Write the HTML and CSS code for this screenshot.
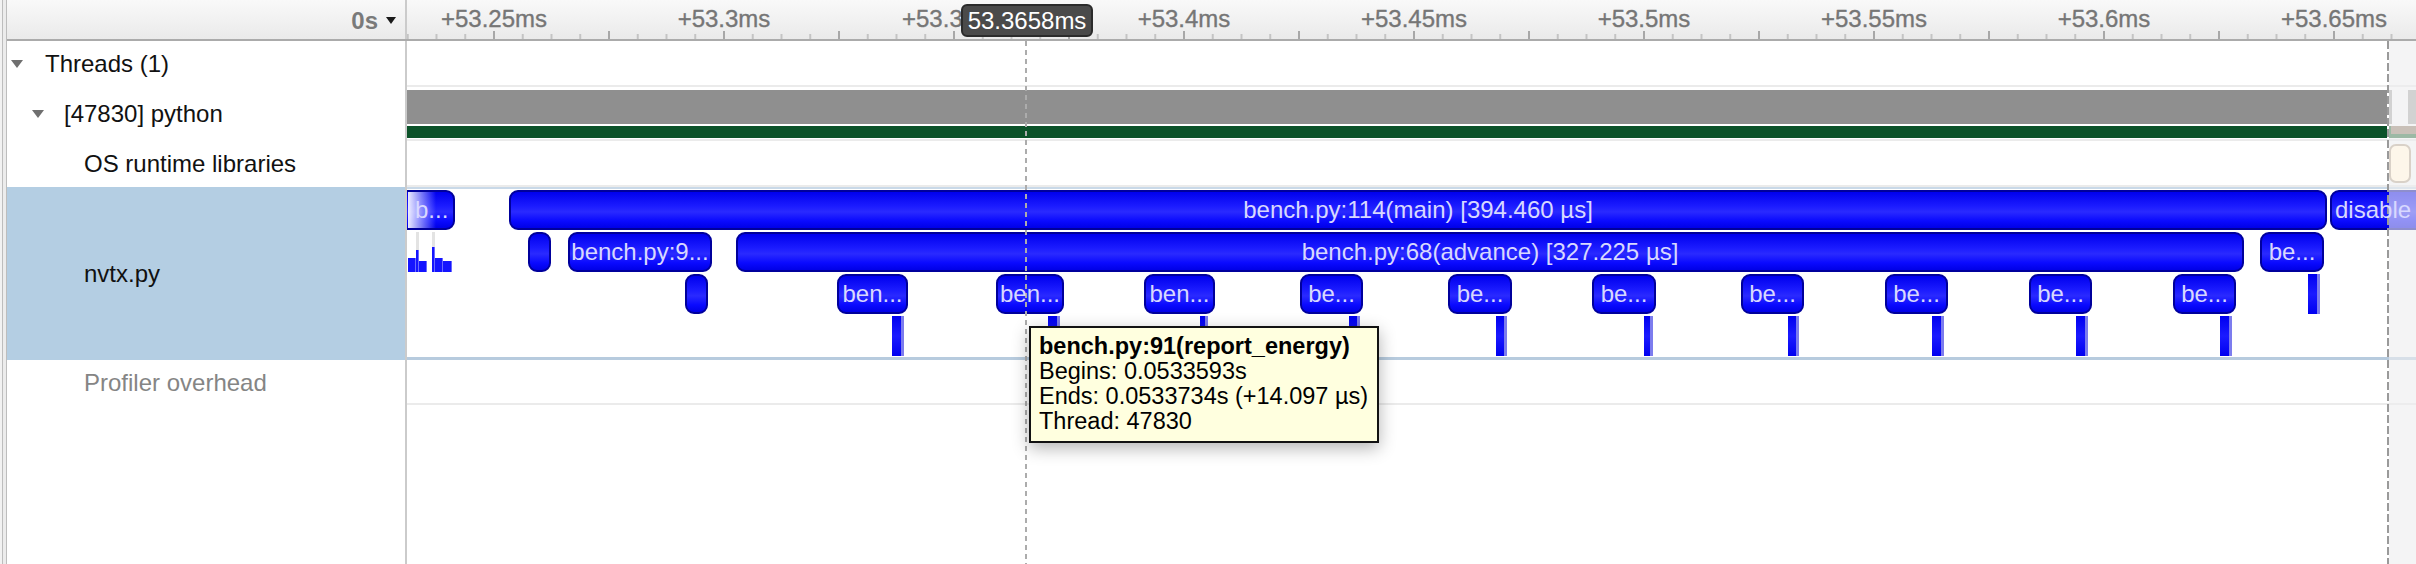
FILE: index.html
```html
<!DOCTYPE html>
<html>
<head>
<meta charset="utf-8">
<title>Timeline</title>
<link rel="stylesheet" href="styles.css">
</head>
<body>
<div class="window">
  <div class="edge"></div>
  <div class="main">
    <div class="header">
      <div class="hdr-left"><span class="zero">0s</span><span class="caret"></span></div>
      <div class="ruler">
        <span class="rlabel" style="left:87px">+53.25ms</span>
        <span class="rlabel" style="left:317px">+53.3ms</span>
        <span class="rlabel-cut" style="left:495px">+53.3</span>
        <span class="rlabel" style="left:777px">+53.4ms</span>
        <span class="rlabel" style="left:1007px">+53.45ms</span>
        <span class="rlabel" style="left:1237px">+53.5ms</span>
        <span class="rlabel" style="left:1467px">+53.55ms</span>
        <span class="rlabel" style="left:1697px">+53.6ms</span>
        <span class="rlabel" style="left:1927px">+53.65ms</span>
        <div class="cursor-label">53.3658ms</div>
      </div>
    </div>
    <div class="body">
      <div class="labels">
        <div class="lrow h-threads"><span class="tri"></span><span class="ltext">Threads (1)</span></div>
        <div class="lrow h-python indent1"><span class="tri"></span><span class="ltext">[47830] python</span></div>
        <div class="lrow h-os indent2"><span class="ltext">OS runtime libraries</span></div>
        <div class="lrow h-nvtx indent2 selected"><span class="ltext">nvtx.py</span></div>
        <div class="lrow h-prof indent2"><span class="ltext muted">Profiler overhead</span></div>
      </div>
      <div class="tracks">
        <div class="trow t-threads"></div>
        <div class="trow t-python">
          <div class="cpu"></div>
          <div class="state"></div>
        </div>
        <div class="trow t-os"></div>
        <div class="trow t-nvtx">
          <div class="hist-bg" style="left:9px"></div>
          <div class="hist-bg" style="left:25px"></div>
          <div class="hist" style="left:1px;width:8px;top:69px;height:14px"></div>
          <div class="hist" style="left:9px;width:3px;top:61px;height:22px"></div>
          <div class="hist" style="left:12px;width:8px;top:72px;height:11px"></div>
          <div class="hist" style="left:25px;width:3px;top:58px;height:25px"></div>
          <div class="hist" style="left:28px;width:8px;top:69px;height:14px"></div>
          <div class="hist" style="left:36px;width:9px;top:72px;height:11px"></div>

          <div class="bar r1 fade" style="left:-9px;width:57px"><span class="btxt">b...</span></div>
          <div class="bar r1" style="left:102px;width:1818px"><span class="btxt">bench.py:114(main) [394.460 µs]</span></div>
          <div class="bar r1 lead" style="left:1923px;width:110px"><span class="btxt">disable</span></div>

          <div class="bar r2" style="left:121px;width:23px"></div>
          <div class="bar r2" style="left:161px;width:144px"><span class="btxt">bench.py:9...</span></div>
          <div class="bar r2" style="left:329px;width:1508px"><span class="btxt">bench.py:68(advance) [327.225 µs]</span></div>
          <div class="bar r2" style="left:1853px;width:64px"><span class="btxt">be...</span></div>

          <div class="bar r3" style="left:278px;width:23px"></div>
          <div class="bar r3" style="left:430px;width:71px"><span class="btxt">ben...</span></div>
          <div class="bar r3" style="left:589px;width:68px"><span class="btxt">ben...</span></div>
          <div class="bar r3" style="left:737px;width:71px"><span class="btxt">ben...</span></div>
          <div class="bar r3" style="left:893px;width:63px"><span class="btxt">be...</span></div>
          <div class="bar r3" style="left:1041px;width:64px"><span class="btxt">be...</span></div>
          <div class="bar r3" style="left:1185px;width:64px"><span class="btxt">be...</span></div>
          <div class="bar r3" style="left:1334px;width:63px"><span class="btxt">be...</span></div>
          <div class="bar r3" style="left:1478px;width:63px"><span class="btxt">be...</span></div>
          <div class="bar r3" style="left:1622px;width:63px"><span class="btxt">be...</span></div>
          <div class="bar r3" style="left:1766px;width:63px"><span class="btxt">be...</span></div>
          <div class="slim r3" style="left:1901px;width:12px"></div>

          <div class="slim r4" style="left:485px;width:12px"></div>
          <div class="slim r4" style="left:641px;width:12px"></div>
          <div class="slim r4" style="left:793px;width:8px"></div>
          <div class="slim r4" style="left:942px;width:11px"></div>
          <div class="slim r4" style="left:1089px;width:11px"></div>
          <div class="slim r4" style="left:1237px;width:9px"></div>
          <div class="slim r4" style="left:1381px;width:11px"></div>
          <div class="slim r4" style="left:1525px;width:12px"></div>
          <div class="slim r4" style="left:1669px;width:12px"></div>
          <div class="slim r4" style="left:1813px;width:12px"></div>
        </div>
        <div class="trow t-prof"></div>

        <div class="dim"></div>
        <div class="seg seg-gray" style="left:1982px;width:3px"></div>
        <div class="seg seg-gray" style="left:2001px;width:9px"></div>
        <div class="seg seg-brown" style="left:1982px;width:27px"></div>
        <div class="os-call"></div>
        <div class="vline hover"></div>
        <div class="vline range-end"></div>

        <div class="tooltip">
          <div class="tt-title">bench.py:91(report_energy)</div>
          <div>Begins: 0.0533593s</div>
          <div>Ends: 0.0533734s (+14.097 µs)</div>
          <div>Thread: 47830</div>
        </div>
      </div>
    </div>
  </div>
</div>
</body>
</html>
```

FILE: styles.css
```css
* { box-sizing: border-box; }
html, body { margin: 0; padding: 0; }
body {
  width: 2416px;
  height: 564px;
  overflow: hidden;
  background: #f2f2f2;
  font-family: "Liberation Sans", Arial, sans-serif;
  font-size: 24px;
  color: #111;
}
.window { display: flex; height: 564px; }
.edge {
  width: 5px;
  margin-left: 2px;
  border-left: 1px solid #bdbdbd;
  border-right: 1px solid #bdbdbd;
  background: #ececec;
}
.main {
  flex: 1;
  min-width: 0;
  display: flex;
  flex-direction: column;
  background: #fff;
}

/* header */
.header {
  height: 41px;
  display: flex;
  border-bottom: 2px solid #ababab;
  background: linear-gradient(#f9f9f9, #eaeaea);
}
.hdr-left {
  width: 400px;
  border-right: 2px solid #cbcbcb;
  display: flex;
  align-items: center;
  justify-content: flex-end;
  gap: 8px;
  padding: 2px 9px 0 0;
}
.zero { color: #7a7a7a; font-weight: bold; }
.caret {
  width: 0; height: 0;
  border-left: 5px solid transparent;
  border-right: 5px solid transparent;
  border-top: 7px solid #1a1a1a;
}
.ruler {
  flex: 1;
  position: relative;
  overflow: hidden;
  background-image:
    linear-gradient(to right, #a8a8a8 0 2px, transparent 2px),
    linear-gradient(to right, #c4c4c4 0 2px, transparent 2px);
  background-size: 115px 8px, 28.75px 5px;
  background-repeat: repeat-x;
  background-position: 86px 100%, 86px 100%;
}
.rlabel, .rlabel-cut {
  position: absolute;
  top: 5px;
  line-height: 28px;
  color: #767676;
  -webkit-text-stroke: 0.35px #767676;
  white-space: nowrap;
}
.rlabel {
  width: 140px;
  margin-left: -70px;
  text-align: center;
}
.cursor-label {
  position: absolute;
  left: 554px;
  top: 4px;
  width: 132px;
  height: 33px;
  background: #4a4a4a;
  border: 2px solid #2b2b2b;
  border-radius: 6px;
  color: #fff;
  text-align: center;
  line-height: 29px;
}

/* body */
.body { flex: 1; display: flex; min-height: 0; }
.labels {
  width: 400px;
  border-right: 2px solid #cbcbcb;
  background: #fff;
}
.lrow { display: flex; align-items: center; padding-bottom: 2px; }
.h-threads { height: 46px; padding-left: 4px; }
.h-python { height: 54px; }
.h-os { height: 46px; }
.h-nvtx { height: 173px; }
.h-prof { height: 45px; }
.indent1 { padding-left: 25px; }
.indent2 { padding-left: 77px; }
.selected { background: #b4cee3; }
.tri {
  width: 0; height: 0;
  border-left: 6px solid transparent;
  border-right: 6px solid transparent;
  border-top: 8px solid #6f6f6f;
  margin: 2px 22px 0 0;
}
.ltext { white-space: nowrap; padding-top: 2px; }
.indent1 .tri { margin-right: 20px; }
.muted { color: #858585; }

.tracks {
  flex: 1;
  position: relative;
  overflow: hidden;
  background: #fff;
}
.trow { position: relative; border-bottom: 2px solid #ebebeb; }
.t-threads { height: 46px; }
.t-python { height: 54px; }
.t-os { height: 46px; }
.t-prof { height: 45px; }
.t-nvtx {
  height: 173px;
  border-top: 2px solid #c9d9e8;
  border-bottom: 3px solid #b7cbde;
}
.cpu {
  position: absolute;
  left: 0; top: 3px;
  width: 1980px; height: 34px;
  background: #8f8f8f;
}
.state {
  position: absolute;
  left: 0; top: 39px;
  width: 1980px; height: 12px;
  background: #0b5229;
}

/* nvtx ranges */
.bar {
  position: absolute;
  height: 40px;
  border: 2px solid #00009c;
  border-radius: 9px;
  background: linear-gradient(#0000ee, #1c1cff 40%, #2a2aff 55%, #0a0aff 80%, #0000e6);
  color: #d8d8ff;
  display: flex;
  align-items: center;
  justify-content: center;
  overflow: hidden;
  white-space: nowrap;
}
.btxt { position: relative; z-index: 1; line-height: 1; }
.bar.fade { justify-content: flex-start; padding-left: 15px; }
.bar.fade::before {
  content: "";
  position: absolute;
  left: 8px; top: -2px; bottom: -2px;
  width: 28px;
  background: linear-gradient(to right, rgba(255,255,255,0.92), rgba(255,255,255,0));
}
.bar.lead { justify-content: flex-start; padding-left: 3px; }
.r1 { top: 1px; }
.r2 { top: 43px; }
.r3 { top: 85px; }
.r4 { top: 127px; }
.slim {
  position: absolute;
  height: 40px;
  background: linear-gradient(#0000f0, #1a1aff 50%, #0000f0);
  box-shadow: inset -3px 0 0 #7c7cee;
}
.hist-bg {
  position: absolute;
  top: 43px;
  width: 3px;
  height: 40px;
  background: #e3e3e3;
}
.hist {
  position: absolute;
  background: #1414ff;
  box-shadow: inset -1px 0 0 #6a6aff;
}

/* region after the capture range */
.dim {
  position: absolute;
  left: 1982px; right: 0; top: 0; bottom: 0;
  background: rgba(236, 236, 238, 0.6);
}
.seg { position: absolute; }
.seg-gray { top: 49px; height: 34px; background: #d2d2d2; }
.seg-brown { top: 85px; height: 12px; background: #c9c0b8; box-shadow: inset 2px -4px 0 #9cb9a5; }
.os-call {
  position: absolute;
  left: 1982px; top: 103px;
  width: 22px; height: 39px;
  background: #fdf6ea;
  border: 2px solid #d9d1c8;
  border-radius: 7px;
}
.vline { position: absolute; top: 0; bottom: 0; }
.vline.hover {
  left: 618px;
  width: 2px;
  background: repeating-linear-gradient(to bottom, #acacac 0 5px, transparent 5px 9px);
}
.vline.range-end {
  left: 1980px;
  width: 2px;
  background: repeating-linear-gradient(to bottom, #9a9a9a 0 8px, transparent 8px 11px);
}

/* tooltip */
.tooltip {
  position: absolute;
  left: 622px;
  top: 285px;
  z-index: 5;
  background: #ffffdf;
  border: 2px solid #121212;
  padding: 6px 9px 7px 8px;
  font-size: 23.5px;
  line-height: 25px;
  color: #000;
  white-space: nowrap;
  box-shadow: 0 5px 16px rgba(0, 0, 0, 0.3);
}
.tt-title { font-weight: bold; }
```
